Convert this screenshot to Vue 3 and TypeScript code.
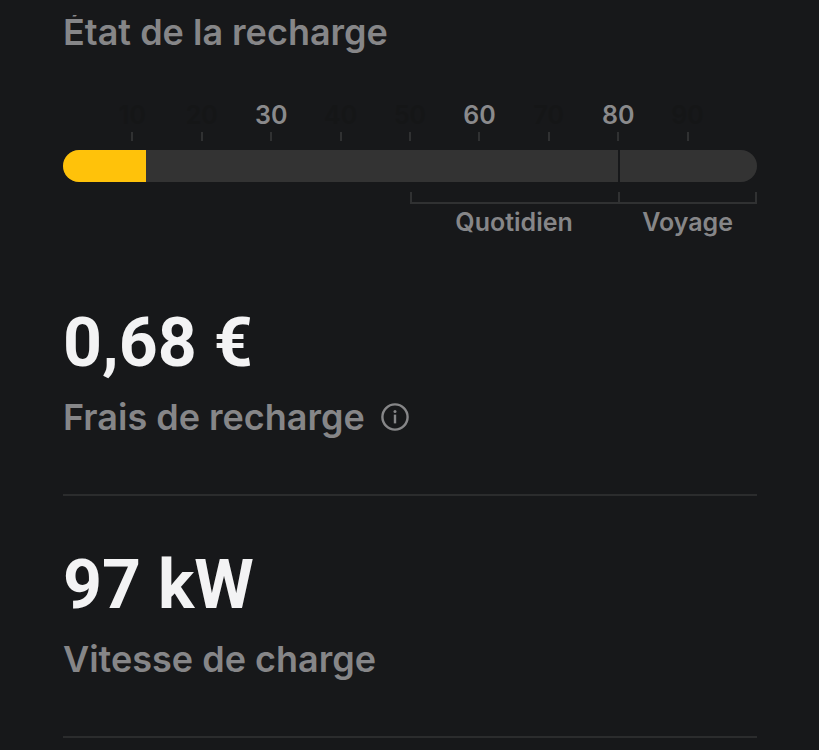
<script setup lang="ts">
interface Mark {
  value: number
  strong: boolean
}

const level = 12
const marks: Mark[] = [10, 20, 30, 40, 50, 60, 70, 80, 90].map((value) => ({
  value,
  strong: [30, 60, 80].includes(value),
}))
</script>

<template>
  <main class="page">
    <section class="state">
      <h2 class="label">État de la recharge</h2>
      <div class="scale">
        <div v-for="mark in marks" :key="mark.value" class="mark" :class="{ strong: mark.strong }">
          <span>{{ mark.value }}</span>
          <i class="tick"></i>
        </div>
      </div>
      <div class="track">
        <div class="fill" :style="{ width: level + '%' }"></div>
        <div class="limit"></div>
      </div>
      <div class="ranges">
        <div class="range">
          <i class="bracket"></i>
          <span>Quotidien</span>
        </div>
        <div class="range">
          <i class="bracket closed"></i>
          <span>Voyage</span>
        </div>
      </div>
    </section>

    <section class="metric">
      <p class="value">0,68 €</p>
      <div class="caption">
        <h2 class="label">Frais de recharge</h2>
        <button class="info" type="button" aria-label="Informations">
          <svg viewBox="0 0 28 28" width="28" height="28" fill="none">
            <circle cx="14" cy="14" r="12.6" stroke="currentColor" stroke-width="2.4" />
            <circle cx="14" cy="8.6" r="1.5" fill="currentColor" />
            <path d="M14 11.6v8.8" stroke="currentColor" stroke-width="2.4" />
          </svg>
        </button>
      </div>
    </section>

    <section class="metric">
      <p class="value">97 kW</p>
      <div class="caption">
        <h2 class="label">Vitesse de charge</h2>
      </div>
    </section>
  </main>
</template>

<style>
body {
  margin: 0;
  background: #17181a;
}
</style>

<style scoped>
.page {
  padding: 15px 62px 0 63px;
  color: #868688;
  font-family: Inter, "Liberation Sans", sans-serif;
  font-weight: 600;
}

.state {
  overflow: hidden;
  padding-bottom: 14px;
}

.label {
  margin: 0;
  font-size: 36px;
  line-height: 34px;
  font-weight: 600;
}

.scale {
  display: grid;
  grid-template-columns: repeat(20, minmax(0, 1fr));
  margin-top: 52px;
}

.mark {
  grid-column-end: span 2;
  display: flex;
  flex-direction: column;
  align-items: center;
  gap: 3px;
  color: #151617;
  font-size: 25px;
  line-height: 28px;
}

.mark:first-child {
  grid-column: 2 / span 2;
}

.mark.strong {
  color: #8a8a8c;
}

.tick {
  width: 2px;
  height: 9px;
  background: #303132;
}

.track {
  display: grid;
  grid-template-columns: minmax(0, 4fr) minmax(0, 1fr);
  height: 32px;
  margin-top: 9px;
  border-radius: 16px;
  background: #333333;
  overflow: hidden;
}

.track > * {
  grid-row: 1;
}

.fill {
  grid-column: 1 / -1;
  background: #ffc20a;
}

.limit {
  grid-column: 2;
  border-left: 2px solid #17181a;
}

.ranges {
  display: grid;
  grid-template-columns: minmax(0, 3fr) minmax(0, 2fr);
  width: 50%;
  margin: 10px 0 0 auto;
}

.range {
  display: flex;
  flex-direction: column;
  text-align: center;
  font-size: 25px;
  line-height: 36px;
}

.bracket {
  height: 10px;
  border: solid #303132;
  border-width: 0 0 2px 2px;
}

.bracket.closed {
  border-right-width: 2px;
}

.metric {
  padding: 49px 0 60px;
  border-bottom: 2px solid #2b2c2d;
}

.value {
  margin: 0;
  color: #f3f3f4;
  font-family: Roboto, "Liberation Sans", sans-serif;
  font-size: 68px;
  line-height: 80px;
  font-weight: 700;
}

.caption {
  display: flex;
  align-items: center;
  gap: 16px;
  margin-top: 17px;
}

.info {
  display: flex;
  padding: 0;
  border: 0;
  background: none;
  color: inherit;
}
</style>
